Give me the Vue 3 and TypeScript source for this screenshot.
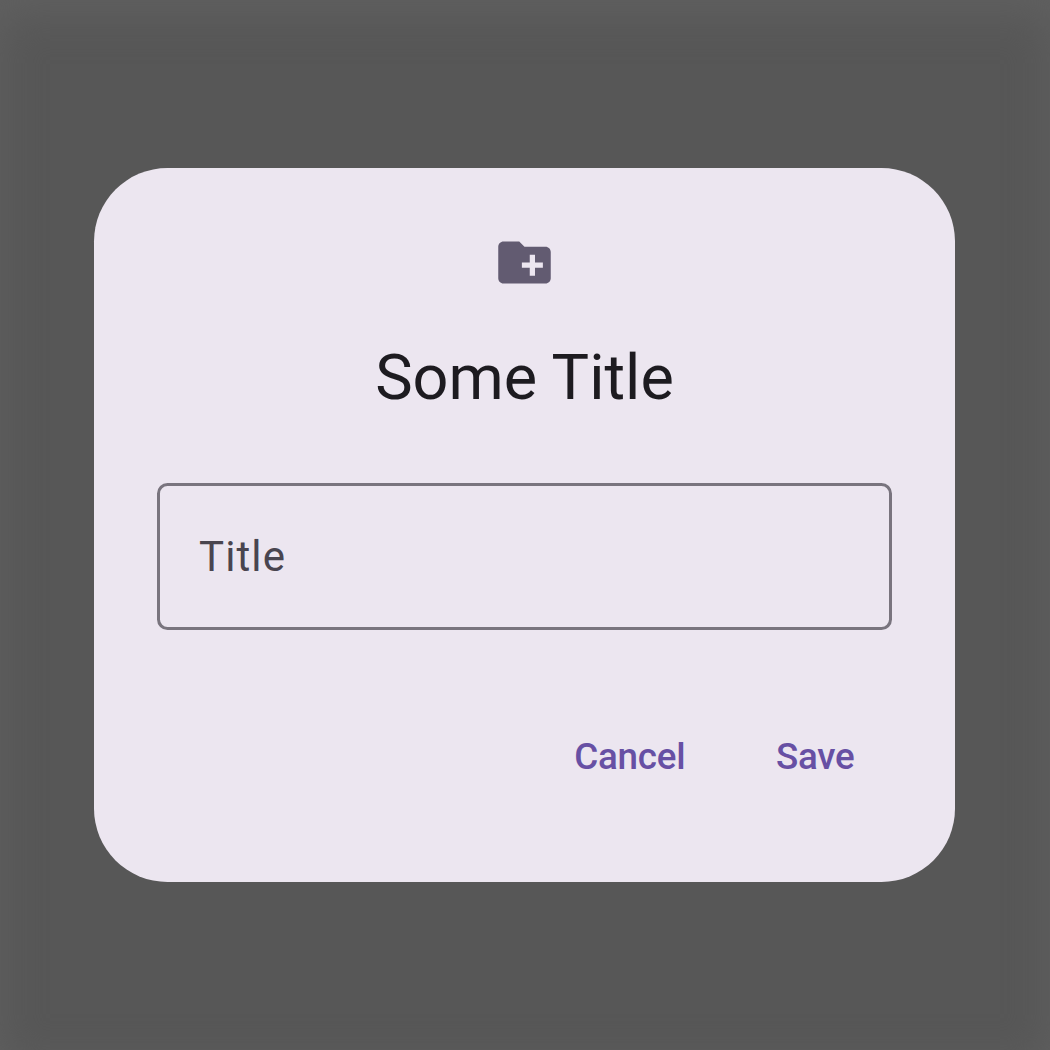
<script setup lang="ts">
import { ref } from 'vue'

const title = ref<string>('Some Title')
const fieldLabel = ref<string>('Title')
</script>

<template>
  <main class="scrim">
    <section class="dialog" role="dialog" :aria-label="title">
      <svg class="icon" viewBox="0 0 24 24" aria-hidden="true">
        <path fill-rule="evenodd" d="M20 6h-8l-2-2H4c-1.110 0-2 .890-2 2v12c0 1.110.890 2 2 2h16c1.110 0 2-.890 2-2V8c0-1.110-.890-2-2-2zm-1 8h-3v3h-2v-3h-3v-2h3V9h2v3h3v2z" />
      </svg>
      <h1 class="title">{{ title }}</h1>
      <div class="field"><span class="label">{{ fieldLabel }}</span></div>
      <footer class="actions">
        <button class="action" type="button">Cancel</button>
        <button class="action" type="button">Save</button>
      </footer>
    </section>
  </main>
</template>

<style>
body {
  margin: 0;
}
</style>

<style scoped>
.scrim {
  box-sizing: border-box;
  width: 1050px;
  height: 1050px;
  padding: 168px 95px 168px 94px;
  background: #575757;
  box-shadow: inset 0 14px 42px #606060;
  font-family: Roboto, sans-serif;
}
.dialog {
  box-sizing: border-box;
  display: flex;
  flex-direction: column;
  align-items: center;
  height: 714px;
  padding: 63px;
  border-radius: 73.5px;
  background: #ece6f0;
}
.icon {
  width: 63px;
  height: 63px;
  fill: #625b71;
}
.title {
  margin: 42px 0 0;
  font-size: 63px;
  line-height: 84px;
  font-weight: 400;
  color: #1d1b20;
}
.field {
  box-sizing: border-box;
  display: flex;
  align-items: center;
  align-self: stretch;
  height: 147px;
  margin-top: 63px;
  padding: 0 39px;
  border: 3px solid #79747e;
  border-radius: 10.5px;
}
.label {
  font-size: 42px;
  line-height: 63px;
  letter-spacing: 1.1px;
  color: #49454f;
}
.actions {
  display: flex;
  align-self: stretch;
  justify-content: flex-end;
  gap: 15.75px;
  margin-top: 74px;
}
.action {
  height: 105px;
  padding: 0 37.5px;
  border: 0;
  background: none;
  font: 500 36.75px/52px Roboto, sans-serif;
  letter-spacing: -0.25px;
  color: #6750a4;
}
</style>
